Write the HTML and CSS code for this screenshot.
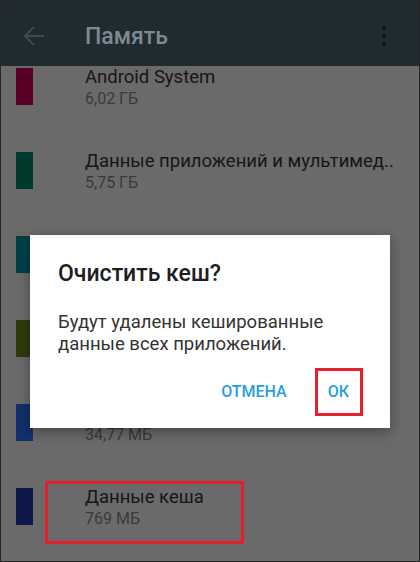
FILE: index.html
```html
<!DOCTYPE html>
<html lang="ru">
<head>
<meta charset="utf-8">
<title>Память</title>
<link rel="stylesheet" href="styles.css">
</head>
<body>
<div class="screen">
  <header class="toolbar">
    <svg class="back" width="24" height="24" viewBox="0 0 24 24"><path d="M22 12H3M12 3l-9 9 9 9" fill="none" stroke="#3b4a50" stroke-width="2"/></svg>
    <h1 class="title">Память</h1>
    <svg class="more" width="8" height="24" viewBox="0 0 8 24"><circle cx="4" cy="4" r="2.2" fill="#10171a"/><circle cx="4" cy="12" r="2.2" fill="#10171a"/><circle cx="4" cy="20" r="2.2" fill="#10171a"/></svg>
  </header>
  <ul class="list">
    <li class="item"><span class="bar c1"></span><div class="text"><div class="name">Android System</div><div class="size">6,02 ГБ</div></div></li>
    <li class="item"><span class="bar c2"></span><div class="text"><div class="name">Данные приложений и мультимед..</div><div class="size">5,75 ГБ</div></div></li>
    <li class="item"><span class="bar c3"></span><div class="text"></div></li>
    <li class="item"><span class="bar c4"></span><div class="text"></div></li>
    <li class="item"><span class="bar c5"></span><div class="text"><div class="name"></div><div class="size">34,77 МБ</div></div></li>
    <li class="item"><span class="bar c6"></span><div class="text"><div class="name">Данные кеша</div><div class="size">769 МБ</div></div></li>
  </ul>
  <div class="dialog">
    <div class="d-title">Очистить кеш?</div>
    <div class="d-body">Будут удалены кешированные данные всех приложений.</div>
    <div class="d-actions">
      <span class="btn">ОТМЕНА</span>
      <span class="btn">ОК</span>
    </div>
  </div>
  <div class="mark mark-ok"></div>
  <div class="mark mark-cache"></div>
</div>
</body>
</html>
```
FILE: styles.css
```css
* { box-sizing: border-box; }
html, body { margin: 0; padding: 0; }
body {
  width: 420px;
  height: 562px;
  overflow: hidden;
  font-family: Roboto, "Noto Sans", sans-serif;
  background: #6a6a6a;
}
.screen {
  position: relative;
  width: 420px;
  height: 562px;
  border: 1px solid #262626;
  background: #6a6a6a;
  overflow: hidden;
}
.toolbar {
  height: 65px;
  background: #1f2b30;
  display: flex;
  align-items: center;
  padding: 5px 0 0 21px;
}
.back { display: block; }
.title {
  margin: 0 0 0 39px;
  font-size: 23px;
  font-weight: 500;
  color: #7e8a8f;
  flex: 1;
}
.more { display: block; margin-right: 31px; }
.list {
  list-style: none;
  margin: 0;
  padding: 2px 0 0 0;
}
.item {
  height: 84px;
  display: flex;
  align-items: flex-start;
  padding-left: 15px;
}
.bar {
  width: 17px;
  height: 37px;
  flex: none;
}
.c1 { background: #5a0026; }
.c2 { background: #003a2c; }
.c3 { background: #003f47; }
.c4 { background: #2e3b0e; }
.c5 { background: #12306c; }
.c6 { background: #0d1848; }
.text {
  margin-left: 52px;
  margin-top: -1px;
}
.name {
  height: 20px;
  font-size: 18.5px;
  line-height: 20px;
  color: #161616;
  white-space: nowrap;
}
.size {
  margin-top: 3px;
  font-size: 16px;
  line-height: 18px;
  color: #3a3a3a;
}
.dialog {
  position: absolute;
  left: 29px;
  top: 234px;
  width: 360px;
  height: 193px;
  background: #fff;
  box-shadow: 0 4px 12px rgba(0,0,0,0.35);
  padding: 25px 28px 0 28px;
}
.d-title {
  font-size: 23px;
  line-height: 28px;
  font-weight: 500;
  color: #1e1e1e;
}
.d-body {
  margin-top: 23px;
  font-size: 18.5px;
  line-height: 22px;
  color: #333;
}
.d-actions {
  display: flex;
  justify-content: flex-end;
  gap: 25px;
  margin: 19px 5px 0 0;
}
.btn {
  height: 36px;
  line-height: 36px;
  padding: 0 8px;
  font-size: 16px;
  font-weight: 500;
  color: #2a9ee0;
}
.mark {
  position: absolute;
  border: 3px solid #e3202c;
}
.mark-ok {
  left: 314px;
  top: 367px;
  width: 48px;
  height: 48px;
}
.mark-cache {
  left: 44px;
  top: 480px;
  width: 199px;
  height: 63px;
}
```
